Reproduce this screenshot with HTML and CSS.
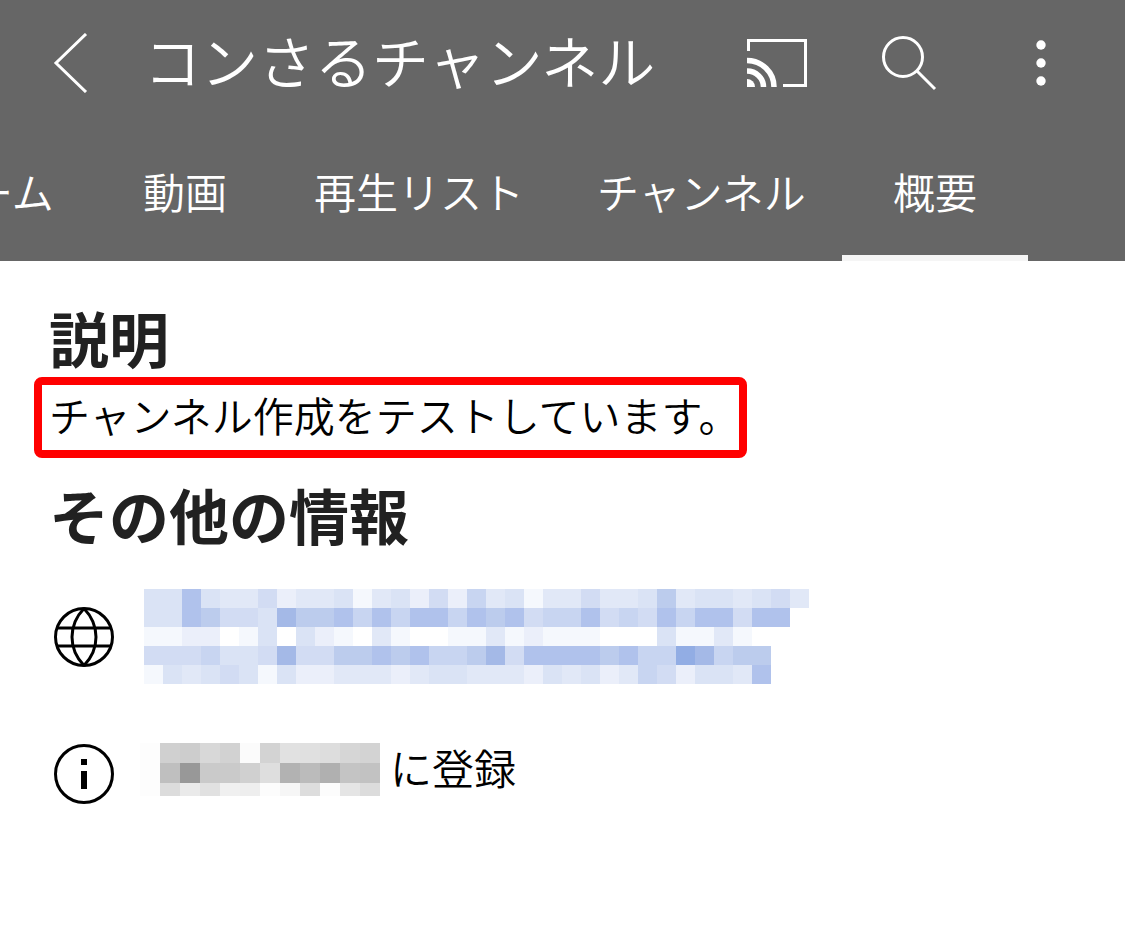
FILE: index.html
```html
<!DOCTYPE html>
<html lang="ja">
<head>
<meta charset="utf-8">
<meta name="viewport" content="width=device-width, initial-scale=1">
<title>コンさるチャンネル</title>
<link rel="stylesheet" href="styles.css">
</head>
<body>
<header class="header">
  <div class="bar">
    <button class="icon-button" type="button" aria-label="戻る">
      <svg width="60" height="60" viewBox="0 0 60 60"><path d="M34 1 4 30l30 29" fill="none" stroke="currentColor" stroke-width="3"/></svg>
    </button>
    <h1 class="title">コンさるチャンネル</h1>
    <div class="actions">
      <button class="icon-button" type="button" aria-label="キャスト">
        <svg width="60" height="60" viewBox="0 0 60 60" fill="none" stroke="currentColor">
          <path d="M1.500 18V7.500h57v45H36" stroke-width="3"/>
          <path d="M0 27.500a27 26.500 0 0 1 27 26.500M0 38a16.500 16 0 0 1 16.500 16" stroke-width="5.500"/>
          <path d="M0 46a8 8 0 0 1 8 8H0z" fill="currentColor" stroke="none"/>
        </svg>
      </button>
      <button class="icon-button" type="button" aria-label="検索">
        <svg width="60" height="60" viewBox="0 0 60 60" fill="none" stroke="currentColor" stroke-width="3"><circle cx="24" cy="24" r="19.500"/><path d="m38 38 18 18"/></svg>
      </button>
      <button class="icon-button" type="button" aria-label="メニュー">
        <svg width="60" height="60" viewBox="0 0 60 60" fill="currentColor"><circle cx="30" cy="12" r="4.700"/><circle cx="30" cy="30" r="4.700"/><circle cx="30" cy="48" r="4.700"/></svg>
      </button>
    </div>
  </div>
  <nav class="tabs" aria-label="チャンネル">
    <a class="tab" href="#home">ホーム</a>
    <a class="tab" href="#videos">動画</a>
    <a class="tab" href="#playlists">再生リスト</a>
    <a class="tab" href="#channels">チャンネル</a>
    <a class="tab tab-active" href="#about" aria-current="page">概要</a>
  </nav>
</header>
<main class="content">
  <h2 class="heading">説明</h2>
  <p class="description">チャンネル作成をテストしています。</p>
  <h2 class="heading">その他の情報</h2>
  <ul class="info">
    <li class="info-row">
      <svg class="info-icon" width="60" height="60" viewBox="0 0 60 60" fill="none" stroke="currentColor" stroke-width="3" aria-hidden="true"><circle cx="30" cy="30" r="28.500"/><path d="M30 1.500C14 18 14 42 30 58.500M30 1.500c16 16.500 16 40.500 0 57M3 21h54M3 39h54"/></svg>
      <svg class="mosaic" id="link-mosaic" width="665" height="95" role="img" aria-label="リンク"></svg>
    </li>
    <li class="info-row">
      <svg class="info-icon" width="60" height="60" viewBox="0 0 60 60" aria-hidden="true"><circle cx="30" cy="30" r="28.500" fill="none" stroke="currentColor" stroke-width="3"/><path d="M27 15h6v6h-6zM27 27h6v18h-6z" fill="currentColor"/></svg>
      <div class="joined">
        <svg class="mosaic" id="date-mosaic" width="240" height="53" role="img" aria-label="登録日"></svg>
        <span class="joined-text">に登録</span>
      </div>
    </li>
  </ul>
</main>
<script src="mosaic.js"></script>
</body>
</html>
```

FILE: styles.css
```css
* {
  box-sizing: border-box;
}

body {
  margin: 0;
  background: #fff;
  color: #000;
  font-family: "Noto Sans CJK JP", sans-serif;
  font-weight: 350;
  font-size: 42px;
  line-height: 60px;
}

svg {
  display: block;
  flex: none;
}

.header {
  background: #666;
  color: #fff;
  overflow: hidden;
}

.bar {
  display: flex;
  align-items: center;
  height: 126px;
  padding: 0 54px 0 50px;
}

.icon-button {
  padding: 0;
  border: 0;
  background: none;
  color: inherit;
}

.bar > .icon-button {
  padding-left: 2px;
}

.title {
  flex: 1;
  margin: 0 0 0 32px;
  padding-bottom: 8px;
  font-size: 57px;
  font-weight: 350;
  white-space: nowrap;
}

.actions {
  display: flex;
  gap: 72px;
}

.tabs {
  display: grid;
  grid-template-columns: 214px 171px 283px 245px 186px;
  margin-left: -71px;
}

.tab {
  height: 135px;
  padding-top: 35px;
  color: inherit;
  text-decoration: none;
  white-space: nowrap;
}

.tab-active {
  border-bottom: 6px solid #f5f5f5;
  text-align: center;
}

.content {
  padding: 38px 34px;
}

.heading {
  margin: 0 15px 2px;
  color: #212121;
  font-size: 60px;
  font-weight: 700;
  line-height: 76px;
}

.description {
  width: fit-content;
  margin: 0 0 18px;
  padding: 0 0 7px 7px;
  border: 8px solid #f00;
  border-radius: 8px;
  font-size: 41px;
  line-height: 58px;
}

.info {
  display: grid;
  gap: 55px;
  margin: 37px 20px 0;
  padding: 0;
  list-style: none;
}

.info-row {
  display: flex;
  align-items: center;
  gap: 30px;
}

.joined {
  display: flex;
  align-items: center;
  gap: 10px;
  margin-left: -4px;
  padding-bottom: 10px;
}

.joined-text {
  padding-bottom: 4px;
  line-height: 56px;
}
```

FILE: mosaic.js
```js
const BLUES = {
  a: '#f5f8fd', b: '#ebeffa', c: '#e1e8f7', d: '#dae3f5', e: '#d2dcf3',
  f: '#c8d5f1', g: '#bccced', h: '#b0c2ec', i: '#a4b9e7', j: '#92ade4'
};

const LINK_ROWS = [
  'ddhdccebccdacdbebfcdacceccdgcddcdec',
  'ddhgeedigghfhfhhfhgheffhefehfhhehh.',
  'aabb.ad.dba.ca..aacabaaa...daaca...',
  'eeefddeieegghghffgiehhhhghffjifgg..',
  'adcdedadbbcccbcddcccbdcdbcfebddch..'
];

const DATE_ROWS = [
  'fd d0 cd d8 d2 fb d3 e1 e0 dd d6 d3',
  'fd bf 98 ca ca d0 de b2 bb b0 c4 c2',
  'fd dc ea e1 f0 ee fc f6 dd fc e5 dc'
];

function drawMosaic(id, rows, size) {
  const svg = document.getElementById(id);
  rows.forEach((row, y) => row.forEach((fill, x) => {
    if (!fill) return;
    const cell = document.createElementNS('http://www.w3.org/2000/svg', 'rect');
    cell.setAttribute('x', x * size);
    cell.setAttribute('y', y * size);
    cell.setAttribute('width', size);
    cell.setAttribute('height', size);
    cell.setAttribute('fill', fill);
    svg.appendChild(cell);
  }));
}

drawMosaic('link-mosaic', LINK_ROWS.map(row => [...row].map(key => BLUES[key])), 19);
drawMosaic('date-mosaic', DATE_ROWS.map(row => row.split(' ').map(v => '#' + v.repeat(3))), 20);
```
